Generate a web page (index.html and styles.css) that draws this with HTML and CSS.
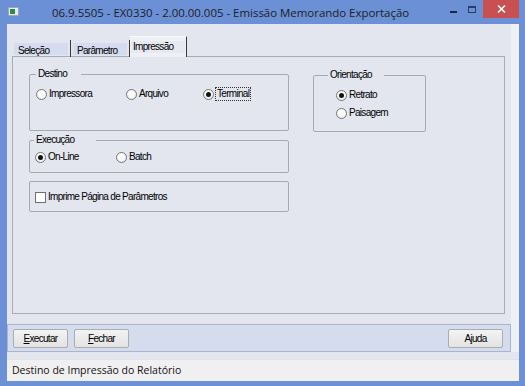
FILE: index.html
```html
<!DOCTYPE html>
<html lang="pt-BR">
<head>
    <meta charset="UTF-8">
    <title>Emissão Memorando Exportação</title>
    <link rel="stylesheet" href="styles.css">
</head>
<body>
    <div class="window">
        <div class="titlebar">
            <span class="app-icon"><span class="app-icon-inner"></span></span>
            <span class="title">06.9.5505 - EX0330 - 2.00.00.005 - Emissão Memorando Exportação</span>
            <span class="controls">
                <span class="ctl-min"></span>
                <span class="ctl-max"></span>
                <span class="ctl-close">
                    <svg width="9" height="8" viewBox="0 0 9 8"><path d="M1 0.5 L8 7.5 M8 0.5 L1 7.5" stroke="#fff" stroke-width="1.6"/></svg>
                </span>
            </span>
        </div>

        <div class="client">
            <div class="main">
                <div class="tabs">
                    <div class="tab"><span>Seleção</span></div>
                    <div class="tab"><span>Parâmetro</span></div>
                    <div class="tab active"><span>Impressão</span></div>
                </div>
                <div class="panel">
                    <div class="col-left">
                        <div class="group group-destino">
                            <span class="group-title">Destino</span>
                            <div class="radio-row">
                                <label class="opt opt-w1"><span class="radio"></span>Impressora</label>
                                <label class="opt opt-w2"><span class="radio"></span>Arquivo</label>
                                <label class="opt"><span class="radio on"></span><span class="focus">Terminal</span></label>
                            </div>
                        </div>
                        <div class="group group-exec">
                            <span class="group-title">Execução</span>
                            <div class="radio-row">
                                <label class="opt opt-w3"><span class="radio on"></span>On-Line</label>
                                <label class="opt"><span class="radio"></span>Batch</label>
                            </div>
                        </div>
                        <div class="group group-check">
                            <label class="opt"><span class="check"></span>Imprime Página de Parâmetros</label>
                        </div>
                    </div>
                    <div class="group group-orient">
                        <span class="group-title">Orientação</span>
                        <div class="radio-col">
                            <label class="opt"><span class="radio on"></span>Retrato</label>
                            <label class="opt"><span class="radio"></span>Paisagem</label>
                        </div>
                    </div>
                </div>
                <div class="buttonbar">
                    <button class="btn"><u>E</u>xecutar</button>
                    <button class="btn"><u>F</u>echar</button>
                    <button class="btn btn-right">A<u>j</u>uda</button>
                </div>
            </div>
            <div class="statusbar">Destino de Impressão do Relatório</div>
        </div>
    </div>
</body>
</html>
```

FILE: styles.css
```css
* {
    box-sizing: border-box;
    margin: 0;
    padding: 0;
}

body {
    width: 525px;
    height: 386px;
    overflow: hidden;
    background: #6b90d6;
    font-family: "Liberation Sans", Arial, sans-serif;
    font-size: 10px;
    letter-spacing: -0.7px;
    color: #000;
}

.window {
    width: 525px;
    height: 386px;
    display: flex;
    flex-direction: column;
}

/* title bar */
.titlebar {
    height: 24px;
    flex-shrink: 0;
    display: flex;
    align-items: center;
    padding-left: 8px;
    letter-spacing: 0;
}

.app-icon {
    width: 11px;
    height: 9px;
    background: #e8ecef;
    border: 1px solid #9aa6b4;
    display: flex;
    align-items: center;
    padding-left: 1px;
    margin-top: -1px;
}

.app-icon-inner {
    width: 5px;
    height: 5px;
    background: #2f8a4a;
}

.title {
    margin-left: 33px;
    font-family: "Open Sans", "Noto Sans", sans-serif;
    font-size: 11.45px;
    color: #1d1d1d;
}

.controls {
    margin-left: auto;
    align-self: flex-start;
    display: flex;
    align-items: flex-start;
}

.ctl-min {
    width: 7px;
    height: 2px;
    background: #1a2740;
    margin-top: 11px;
}

.ctl-max {
    width: 8px;
    height: 7px;
    border: 1px solid #2c3d66;
    border-top-width: 2px;
    margin: 6px 0 0 11px;
}

.ctl-close {
    width: 36px;
    height: 18px;
    margin: 0 6px 0 7px;
    background: #c85050;
    display: flex;
    align-items: center;
    justify-content: center;
}

/* client area */
.client {
    flex: 1;
    margin: 0 6px 6px 7px;
    background: #e3e6ef;
    display: flex;
    flex-direction: column;
}

.main {
    flex: 1;
    border-right: 8px solid #eef0f4;
    padding: 12px 6px 0 5px;
    display: flex;
    flex-direction: column;
}

.tabs {
    display: flex;
    height: 21px;
    flex-shrink: 0;
    align-items: flex-end;
    margin-bottom: -1px;
    position: relative;
}

.tab {
    width: 59px;
    height: 17px;
    padding: 3px 2px 2px 2px;
    border-right: 1px solid #3a3a3a;
}

.tab span {
    display: block;
    height: 12px;
    padding: 0 4px;
    line-height: 15px;
    background: #d5dcf0;
}

.tab.active {
    width: 57px;
    height: 21px;
    padding: 4px 1px 0 1px;
    background: #eef0f5;
    border-top: 1px solid #fbfbfd;
}

.tab.active span {
    background: #e6e9f0;
    line-height: 12px;
    height: 12px;
    padding-left: 2px;
}

.panel {
    height: 258px;
    flex-shrink: 0;
    border: 1px solid #a7abb4;
    display: flex;
    align-items: flex-start;
    padding: 17px 0 0 16px;
    gap: 24px;
}

.col-left {
    width: 260px;
    display: flex;
    flex-direction: column;
}

/* group boxes */
.group {
    position: relative;
    border: 1px solid #a5a9b2;
    border-radius: 2px;
    flex-shrink: 0;
}

.group-title {
    position: absolute;
    top: -7px;
    left: 6px;
    padding: 0 14px 0 2px;
    line-height: 12px;
    background: #e3e6ef;
}

.group-destino {
    height: 57px;
    padding: 13px 0 0 6px;
}

.group-exec {
    height: 33px;
    margin-top: 9px;
    padding: 10px 0 0 5px;
}

.group-exec .group-title {
    left: 4px;
    padding-right: 22px;
}

.group-check {
    height: 31px;
    margin-top: 8px;
    padding: 9px 0 0 5px;
}

.group-orient {
    width: 113px;
    height: 57px;
    margin-top: 1px;
    padding: 13px 0 0 22px;
}

.group-orient .group-title {
    left: 14px;
    padding-right: 12px;
}

.radio-col {
    display: flex;
    flex-direction: column;
    gap: 6px;
}

.radio-row {
    display: flex;
}

.opt {
    display: flex;
    align-items: center;
    height: 12px;
    line-height: 12px;
}

.opt-w1 {
    width: 90px;
}

.opt-w2 {
    width: 77px;
}

.opt-w3 {
    width: 81px;
}

.radio {
    width: 11px;
    height: 11px;
    border-radius: 50%;
    border: 1px solid #767676;
    background: radial-gradient(circle at 50% 40%, #ffffff 30%, #e4e4e4 100%);
    margin-right: 2px;
    display: flex;
    align-items: center;
    justify-content: center;
    flex-shrink: 0;
}

.radio.on::after {
    content: "";
    width: 5px;
    height: 5px;
    border-radius: 50%;
    background: #111;
}

.check {
    width: 11px;
    height: 11px;
    border: 1px solid #6f6f6f;
    background: #fff;
    margin-right: 2px;
}

.focus {
    outline: 1px dotted #333;
    outline-offset: 0;
    padding: 0 1px;
}

/* buttons */
.buttonbar {
    margin: 10px -6px 0 -5px;
    height: 28px;
    flex-shrink: 0;
    background: #d4dcee;
    border: 1px solid #aab5cc;
    display: flex;
    align-items: center;
    padding: 0 7px 0 5px;
    gap: 6px;
}

.btn {
    width: 55px;
    height: 19px;
    font-family: "Liberation Sans", Arial, sans-serif;
    font-size: 10px;
    letter-spacing: -0.7px;
    color: #000;
    background: linear-gradient(#f3f3f3, #e3e3e3);
    border: 1px solid #acacac;
    border-radius: 2px;
}

.btn-right {
    margin-left: auto;
}

.statusbar {
    height: 22px;
    flex-shrink: 0;
    margin-top: 7px;
    background: #f0f0f0;
    border-top: 1px solid #dfe1e6;
    font-family: "Open Sans", "Noto Sans", sans-serif;
    font-size: 10.5px;
    letter-spacing: 0;
    line-height: 21px;
    padding-left: 5px;
    color: #111;
}
```
